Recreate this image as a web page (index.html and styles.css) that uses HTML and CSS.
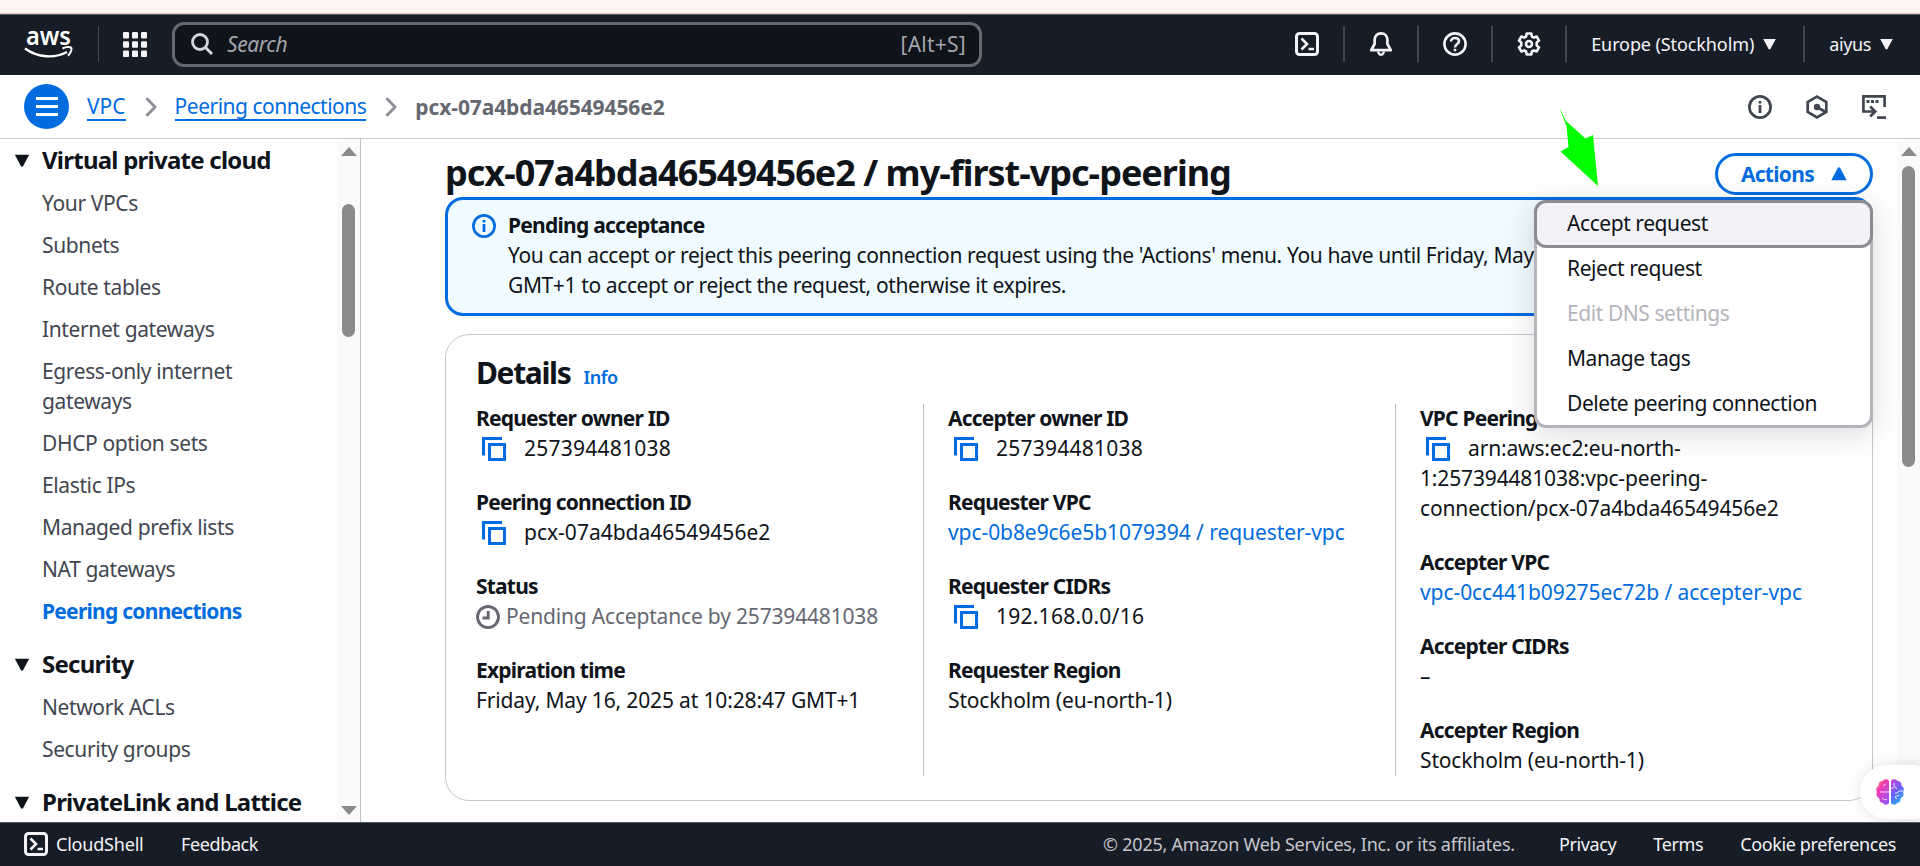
FILE: index.html
```html
<!DOCTYPE html>
<html lang="en">
<head>
<meta charset="utf-8">
<title>Peering connections | VPC Console</title>
<link rel="stylesheet" href="styles.css">
</head>
<body>
<svg class="defs" width="0" height="0">
  <symbol id="copy" viewBox="0 0 24 24"><path d="M1.500 18.500V1.500H20M7.500 7.500h15v15h-15z" fill="none" stroke="currentColor" stroke-width="3"/></symbol>
  <symbol id="shell" viewBox="0 0 24 24"><rect x="1.500" y="1.500" width="21" height="21" rx="3" fill="none" stroke="currentColor" stroke-width="3"/><path d="M6.500 6.500l5.500 5.500-5.500 5.500M13.500 17h5.500" fill="none" stroke="currentColor" stroke-width="2.600"/></symbol>
  <symbol id="info" viewBox="0 0 24 24"><circle cx="12" cy="12" r="10.600" fill="none" stroke="currentColor" stroke-width="2.700"/><path d="M12 10v8M12 6v2.500" fill="none" stroke="currentColor" stroke-width="2.800"/></symbol>
  <symbol id="down" viewBox="0 0 16 14"><path d="M.3 .8h15.400L9 13.500H7z" fill="currentColor"/></symbol>
  <symbol id="scroll" viewBox="0 0 16 9"><path d="M0 9L8 0l8 9z" fill="#8b8b8b"/></symbol>
  <symbol id="chevron" viewBox="0 0 12 20"><path d="M1.500 1.200L10 10l-8.500 8.800" fill="none" stroke="#8c8c94" stroke-width="2.800"/></symbol>
</svg>

<div class="strip"></div>
<header class="topbar">
  <svg class="aws" viewBox="0 0 50 34"><text x="2" y="18" textLength="45" lengthAdjust="spacingAndGlyphs">aws</text><path d="M1 21.500C14 31 31 31.500 43 25" fill="none" stroke="#fff" stroke-width="2.400"/><path d="M38.500 21.500c4-2 8-1.500 8.800-.8.700 1.200-.4 5.500-3.300 8" fill="none" stroke="#fff" stroke-width="2"/></svg>
  <i class="sep sep-logo"></i>
  <svg class="grid-icon" viewBox="0 0 24 25" fill="#f3f3f7"><rect width="6" height="6.500" rx="1"/><rect x="9" width="6" height="6.500" rx="1"/><rect x="18" width="6" height="6.500" rx="1"/><rect y="9.200" width="6" height="6.500" rx="1"/><rect x="9" y="9.200" width="6" height="6.500" rx="1"/><rect x="18" y="9.200" width="6" height="6.500" rx="1"/><rect y="18.400" width="6" height="6.500" rx="1"/><rect x="9" y="18.400" width="6" height="6.500" rx="1"/><rect x="18" y="18.400" width="6" height="6.500" rx="1"/></svg>
  <div class="search">
    <svg viewBox="0 0 22 22"><circle cx="9" cy="9" r="7.500" fill="none" stroke="#d5d5dc" stroke-width="2.800"/><path d="M14.300 14.300l6.700 6.700" stroke="#d5d5dc" stroke-width="3"/></svg>
    <span class="placeholder">Search</span><span class="hint">[Alt+S]</span>
  </div>
  <nav class="tools">
    <svg class="ic"><use href="#shell"/></svg>
    <i class="sep"></i>
    <svg class="ic" viewBox="0 0 24 24" fill="none" stroke="currentColor" stroke-width="2.700" stroke-linejoin="round"><path d="M12 1.400c-4.200 0-6.400 3-6.400 6.600v4L2.200 18.200h19.600L18.400 12V8c0-3.600-2.200-6.600-6.400-6.600z"/><path d="M9.300 19.500v1l1.700 2.200h2l1.700-2.200v-1" stroke-width="2.300"/></svg>
    <i class="sep"></i>
    <svg class="ic" viewBox="0 0 24 24" fill="none" stroke="currentColor" stroke-width="2.600"><circle cx="12" cy="12" r="10.600"/><path d="M8 9.500C8 7.200 9.700 6 12 6s4 1.200 4 3.200c0 2.800-4 2.800-4 6.300M12 16.700v2.600"/></svg>
    <i class="sep"></i>
    <svg class="ic" viewBox="0 0 24 24" fill="none" stroke="currentColor" stroke-width="2.600" stroke-linejoin="round"><path d="M9.700 1.500h4.600l.6 3 1.900 1.100 2.900-1 2.300 4-2.300 2v2.800l2.300 2-2.300 4-2.900-1-1.900 1.100-.6 3H9.700l-.6-3-1.900-1.100-2.900 1-2.300-4 2.300-2v-2.800L2 8.600l2.300-4 2.900 1 1.900-1.100z"/><circle cx="12" cy="12" r="3"/></svg>
    <i class="sep"></i>
    <span class="region">Europe (Stockholm)</span><svg class="caret"><use href="#down"/></svg>
    <i class="sep sep-user"></i>
    <span class="user">aiyus</span><svg class="caret"><use href="#down"/></svg>
  </nav>
</header>

<div class="crumbs">
  <div class="burger"><i></i><i></i><i></i></div>
  <a class="crumb vpc">VPC</a>
  <svg class="chev"><use href="#chevron"/></svg>
  <a class="crumb">Peering connections</a>
  <svg class="chev"><use href="#chevron"/></svg>
  <span class="here">pcx-07a4bda46549456e2</span>
  <div class="crumb-tools">
    <svg class="ic"><use href="#info"/></svg>
    <svg class="ic" viewBox="0 0 24 24" fill="none" stroke="currentColor" stroke-width="2.700"><path d="M12 1.600l9.300 5.400v10L12 22.400 2.700 17V7z"/><circle cx="12" cy="12" r="3.200" fill="currentColor" stroke="none"/><path d="M12 12l8.500 5"/></svg>
    <svg class="ic" viewBox="0 0 24 24" fill="none" stroke="currentColor" stroke-width="2.700"><path d="M22.600 12V1.400H1.400v15.100H12M8.200 11.500l5 5-5 5M15 22.600h9"/><path d="M4.500 6.500h3M9 6.500h3M13.500 6.500h3" stroke-width="2.800"/></svg>
  </div>
</div>

<div class="body">
  <aside class="side">
    <nav class="menu">
      <h3><svg class="tri"><use href="#down"/></svg>Virtual private cloud</h3>
      <ul>
        <li>Your VPCs</li><li>Subnets</li><li>Route tables</li><li>Internet gateways</li>
        <li>Egress-only internet<br>gateways</li><li>DHCP option sets</li><li>Elastic IPs</li>
        <li>Managed prefix lists</li><li>NAT gateways</li><li class="current">Peering connections</li>
      </ul>
      <h3><svg class="tri"><use href="#down"/></svg>Security</h3>
      <ul><li>Network ACLs</li><li>Security groups</li></ul>
      <h3><svg class="tri"><use href="#down"/></svg>PrivateLink and Lattice</h3>
    </nav>
    <div class="track"><svg class="arrow"><use href="#scroll"/></svg><i class="thumb"></i><svg class="arrow end"><use href="#scroll"/></svg></div>
  </aside>

  <main class="main">
    <div class="titlebar">
      <h1>pcx-07a4bda46549456e2 / my-first-vpc-peering</h1>
      <div class="actions">Actions<svg><use href="#down"/></svg>
        <div class="dropdown">
          <div class="opt hot">Accept request</div>
          <div class="opt">Reject request</div>
          <div class="opt off">Edit DNS settings</div>
          <div class="opt">Manage tags</div>
          <div class="opt">Delete peering connection</div>
        </div>
      </div>
    </div>
    <section class="alert">
      <svg class="ic"><use href="#info"/></svg>
      <div><b>Pending acceptance</b><p>You can accept or reject this peering connection request using the 'Actions' menu. You have until Friday, May<br>GMT+1 to accept or reject the request, otherwise it expires.</p></div>
    </section>
    <section class="card">
      <h2>Details<span>Info</span></h2>
      <div class="cols">
        <dl>
          <dt>Requester owner ID</dt><dd class="num"><svg class="copy"><use href="#copy"/></svg>257394481038</dd>
          <dt>Peering connection ID</dt><dd class="id"><svg class="copy"><use href="#copy"/></svg>pcx-07a4bda46549456e2</dd>
          <dt>Status</dt><dd class="status"><svg viewBox="0 0 24 24" fill="none" stroke="currentColor" stroke-width="2.900"><circle cx="12" cy="12" r="10.500"/><path d="M12.200 6v7H6.500"/></svg>Pending Acceptance by 257394481038</dd>
          <dt>Expiration time</dt><dd class="date">Friday, May 16, 2025 at 10:28:47 GMT+1</dd>
        </dl>
        <dl>
          <dt>Accepter owner ID</dt><dd class="num"><svg class="copy"><use href="#copy"/></svg>257394481038</dd>
          <dt>Requester VPC</dt><dd class="link">vpc-0b8e9c6e5b1079394 / requester-vpc</dd>
          <dt>Requester CIDRs</dt><dd class="num"><svg class="copy"><use href="#copy"/></svg>192.168.0.0/16</dd>
          <dt>Requester Region</dt><dd>Stockholm (eu-north-1)</dd>
        </dl>
        <dl>
          <dt>VPC Peering</dt><dd class="arn"><svg class="copy"><use href="#copy"/></svg>arn:aws:ec2:eu-north-<br>1:257394481038:vpc-peering-<br>connection/pcx-07a4bda46549456e2</dd>
          <dt>Accepter VPC</dt><dd class="link">vpc-0cc441b09275ec72b / accepter-vpc</dd>
          <dt>Accepter CIDRs</dt><dd>–</dd>
          <dt>Accepter Region</dt><dd>Stockholm (eu-north-1)</dd>
        </dl>
      </div>
    </section>
  </main>
  <div class="track"><svg class="arrow"><use href="#scroll"/></svg><i class="thumb tall"></i></div>
</div>

<footer class="footer">
  <svg class="ic"><use href="#shell"/></svg><span class="cs">CloudShell</span><span class="fb">Feedback</span>
  <span class="copyright">© 2025, Amazon Web Services, Inc. or its affiliates.</span>
  <span class="privacy">Privacy</span><span class="terms">Terms</span><span class="cookie">Cookie preferences</span>
</footer>

<div class="bubble">
  <svg viewBox="0 0 28 26">
    <defs><linearGradient id="bl" x1="0" y1="0" x2=".6" y2="1"><stop offset="0" stop-color="#ffa040"/><stop offset=".4" stop-color="#f03cb4"/><stop offset="1" stop-color="#a050f0"/></linearGradient><linearGradient id="br" x1="0" y1="0" x2=".5" y2="1"><stop offset="0" stop-color="#d040e0"/><stop offset=".55" stop-color="#6a60f5"/><stop offset="1" stop-color="#30a8ff"/></linearGradient></defs>
    <path fill="url(#bl)" d="M13 2v22c-1 2-5 2.500-6 0-2.500 0-4-2-3.500-4.500C0 18 0 15 1 13c-1.500-2-1-5 1.500-6C2 4 4 2 6.500 2c1-2.500 5.500-2.500 6.500 0z"/>
    <path fill="url(#br)" d="M15 2v22c1 2 5 2.500 6 0 2.500 0 4-2 3.500-4.500C28 18 28 15 27 13c1.500-2 1-5-1.500-6C26 4 24 2 21.500 2c-1-2.500-5.500-2.500-6.500 0z"/>
    <path d="M4 13h9M7 7c1 0 1-2 3-2M6 19c1 2 4 2 5 1M18 4v3l3 3M15 9h3M27 12h-4l-2 2h-2M21 20l-2-2 4-2" fill="none" stroke="#fff" stroke-width="1" opacity=".8"/>
  </svg>
</div>
<svg class="pointer" viewBox="0 0 40 80"><path d="M0 0l7 14 19.500 17.500L34 28l5 51L1.500 44.500 9.500 40l-2-21z" fill="#0f0"/></svg>
</body>
</html>
```
FILE: styles.css
```css
* { box-sizing: border-box; }
body { margin: 0; width: 1920px; height: 866px; overflow: hidden; display: flex; flex-direction: column; background: #fff; color: #0f141a; font: 21px/30px "Noto Sans", "Open Sans", sans-serif; letter-spacing: -.38px; white-space: nowrap; position: relative; }
h1, h2, h3, ul, dl, dd, p { margin: 0; padding: 0; list-style: none; }
svg { display: block; flex: none; }
.defs { position: absolute; }
.ic { width: 24px; height: 24px; }

.strip { height: 14px; flex: none; background: #fff5f3; border-bottom: 1px solid #e9c9c2; }
.topbar { height: 61px; flex: none; background: #161d26; display: flex; align-items: center; padding: 0 27px 2px 24px; color: #f3f3f7; font-size: 18px; border-top: 1px solid #555b62; }
.aws { width: 50px; height: 34px; overflow: visible; }
.aws text { font: 600 26px/30px "Noto Sans", sans-serif; fill: #fff; letter-spacing: 0; }
.sep { width: 2px; height: 36px; background: #424650; flex: none; }
.sep-logo { margin: 0 24px 0 24px; width: 1px; }
.grid-icon { width: 24px; height: 25px; margin-right: 25px; }
.search { width: 810px; height: 45px; border: 3px solid #656871; border-radius: 12px; background: #0f141a; display: flex; align-items: center; padding: 0 13px 0 16px; font-size: 21px; color: #a4a4ad; }
.search svg { width: 22px; height: 22px; margin-right: 14px; }
.placeholder { font-style: italic; flex: 1; letter-spacing: -.4px; }
.hint { letter-spacing: .25px; }
.tools { margin-left: auto; display: flex; align-items: center; }
.tools .sep { margin: 0 24px 0 24px; }
.tools .sep-user { margin: 0 24px 0 27px; }
.region { letter-spacing: -.1px; }
.caret { width: 13px; height: 12px; margin-left: 9px; }

.crumbs { height: 64px; flex: none; border-bottom: 1px solid #c9c9cf; display: flex; align-items: center; padding: 0 34px 0 24px; }
.burger { width: 45px; height: 45px; border-radius: 50%; background: #006ce0; display: flex; flex-direction: column; align-items: center; justify-content: center; gap: 5px; margin-right: 18px; }
.burger i { width: 22px; height: 3px; background: #fff; }
.crumb { color: #006ce0; border-bottom: 2px solid #006ce0; line-height: 27px; height: 28px; margin-top: 1px; letter-spacing: -.5px; }
.vpc { letter-spacing: 0; }
.chev { width: 12px; height: 20px; margin: 0 18px 0 19px; }
.here { color: #656871; font-weight: 700; letter-spacing: -.1px; }
.crumb-tools { margin-left: auto; display: flex; gap: 33px; color: #424650; }

.body { flex: 1; min-height: 0; display: flex; }
.side { width: 361px; border-right: 1px solid #c0c0c7; display: flex; overflow: hidden; }
.menu { flex: 1; padding: 6px 0 0 42px; }
.menu h3 { font-size: 24px; font-weight: 700; letter-spacing: -.76px; display: flex; align-items: center; line-height: 30px; }
.tri { width: 16px; height: 13px; margin: 0 12px 0 -28px; }
.menu ul { padding: 13px 0 23px; display: grid; gap: 12px; color: #424650; }
.menu .current { color: #006ce0; font-weight: 700; letter-spacing: -.74px; }
.track { width: 23px; background: #fafafa; flex: none; display: flex; flex-direction: column; align-items: center; padding: 8px 0 7px; }
.arrow { width: 16px; height: 9px; }
.arrow.end { margin-top: auto; transform: rotate(180deg); }
.thumb { width: 13px; height: 133px; margin-top: 48px; border-radius: 7px; background: #8b8b8b; }
.thumb.tall { height: 301px; margin-top: 10px; }

.main { flex: 1; min-width: 0; padding: 11px 24px 0 84px; }
.titlebar { display: flex; justify-content: space-between; height: 47px; }
h1 { font-size: 36px; line-height: 45px; font-weight: 700; letter-spacing: -1px; }
.actions { position: relative; width: 158px; height: 42px; margin-top: 3px; border: 3px solid #006ce0; border-radius: 21px; background: #fff; color: #006ce0; font-weight: 700; display: flex; align-items: center; justify-content: center; gap: 17px; letter-spacing: -.7px; }
.actions > svg { width: 16px; height: 14px; transform: rotate(180deg); }
.dropdown { position: absolute; z-index: 2; right: -3px; top: 44px; width: 339px; height: 228px; border: 3px solid #b4b4bb; border-radius: 12px; background: #fff; box-shadow: 0 6px 30px 2px rgba(0,7,22,.13); color: #0f141a; font-weight: 400; letter-spacing: -.43px; }
.opt { height: 45px; padding: 7px 30px; line-height: 30px; }
.hot { height: 48px; margin: -3px -3px -2px; padding: 5px 30px; border: 3px solid #8c8c94; border-radius: 12px; background: #f3f3f7; }
.off { color: #b4b4bb; }

.alert { height: 119px; border: 3px solid #006ce0; border-radius: 18px; background: #f0fbff; display: flex; padding: 10px 24px; gap: 12px; overflow: hidden; letter-spacing: -.38px; }
.alert .ic { color: #006ce0; margin-top: 4px; }
.alert b { font-weight: 700; letter-spacing: -.75px; }
.card { margin-top: 18px; height: 467px; border: 1px solid #c6c6cd; border-radius: 24px; padding: 20px 31px 0 30px; }
h2 { font-size: 30px; line-height: 36px; height: 36px; font-weight: 700; letter-spacing: -1.35px; margin-bottom: 12px; }
h2 span { font-size: 18px; font-weight: 600; color: #006ce0; margin-left: 13px; letter-spacing: -.4px; }
.cols { display: grid; grid-template-columns: 447px 472px 1fr; }
dl { height: 372px; margin-top: 1px; }
dl + dl { border-left: 1px solid #c0c0c7; padding-left: 24px; }
dt { font-weight: 700; letter-spacing: -.8px; }
dt:first-child { margin-top: -1px; }
dd { margin-bottom: 24px; letter-spacing: -.15px; }
dd svg { display: inline-block; width: 24px; height: 24px; vertical-align: -5px; }
.copy { color: #006ce0; margin: 0 18px 0 6px; }
.num { letter-spacing: .24px; }
.id { letter-spacing: 0; }
.status { color: #656871; letter-spacing: -.18px; }
.status svg { margin-right: 6px; }
.link { color: #006ce0; letter-spacing: -.07px; }

.footer { height: 44px; flex: none; background: #161d26; color: #f3f3f7; display: flex; align-items: center; padding: 0 24px 1px; font-size: 18px; border-top: 1px solid #555b62; }
.cs { margin-left: 8px; width: 125px; letter-spacing: -.2px; }
.copyright { margin-left: auto; color: #c6c6cd; letter-spacing: -.23px; }
.privacy { margin-left: 44px; }
.terms { margin-left: 37px; }
.cookie { margin-left: 37px; }

.bubble { position: absolute; right: -20px; top: 765px; width: 80px; height: 54px; border-radius: 27px; background: #fff; box-shadow: 0 0 14px rgba(0,0,0,.13); padding: 14px 16px; }
.bubble svg { width: 28px; height: 26px; }
.pointer { position: absolute; z-index: 3; left: 1559px; top: 107px; width: 40px; height: 80px; }
```
